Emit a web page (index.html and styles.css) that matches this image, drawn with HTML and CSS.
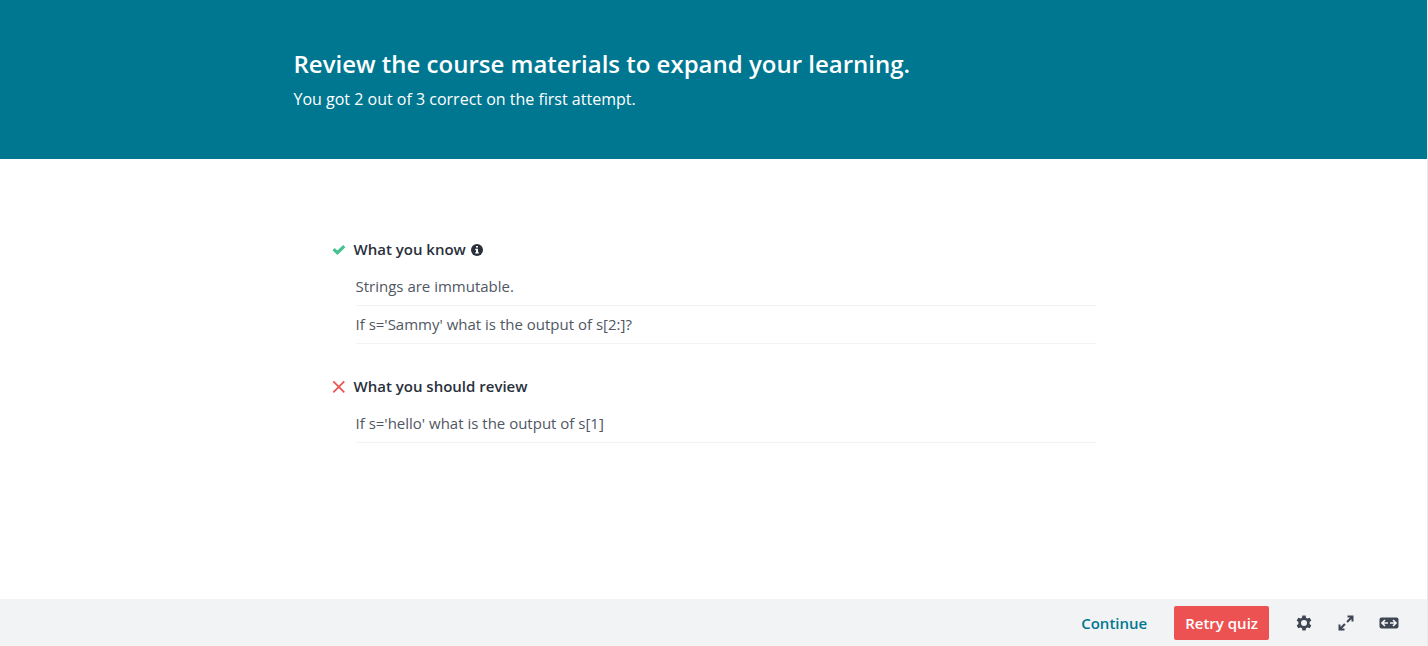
FILE: index.html
```html
<!DOCTYPE html>
<html lang="en">
<head>
<meta charset="utf-8">
<meta name="viewport" content="width=device-width, initial-scale=1">
<title>Quiz results</title>
<link rel="stylesheet" href="styles.css">
</head>
<body>
<div class="page">
  <header class="banner">
    <div class="banner-inner">
      <h1 class="banner-title">Review the course materials to expand your learning.</h1>
      <p class="banner-score">You got 2 out of 3 correct on the first attempt.</p>
    </div>
  </header>
  <main class="results">
    <section class="group">
      <h2 class="group-title">
        <svg class="mark mark-correct" viewBox="0 -1 14 14" aria-hidden="true"><path d="M.5 7.300 2.700 5.100 5.400 7.600 11.200 2 13.400 4.200 5.400 12Z"/></svg>
        <span>What you know</span>
        <svg class="info" viewBox="0 -1 12 12" role="img" aria-label="Information"><circle cx="6" cy="6" r="6"/><path d="M5 2h2v1.600H5zM4.200 4.700H7v3.600h.9v1.300H4.200V8.300H5V6h-.8z"/></svg>
      </h2>
      <ul class="questions">
        <li class="question">Strings are immutable.</li>
        <li class="question">If s='Sammy' what is the output of s[2:]?</li>
      </ul>
    </section>
    <section class="group">
      <h2 class="group-title">
        <svg class="mark mark-wrong" viewBox="0 -1 14 14" aria-hidden="true"><path d="M1.300 1.300 12.300 12.300M12.300 1.300 1.300 12.300"/></svg>
        <span>What you should review</span>
      </h2>
      <ul class="questions">
        <li class="question">If s='hello' what is the output of s[1]</li>
      </ul>
    </section>
  </main>
  <footer class="toolbar">
    <a class="continue" href="#">Continue</a>
    <button class="retry" type="button">Retry quiz</button>
    <button class="tool" type="button" aria-label="Settings">
      <svg class="tool-icon" viewBox="0 0 20 20"><path fill-rule="evenodd" d="M8.400 2.500h3.200l.4 2.200 1.500.9 2.200-.8 1.600 2.800-1.700 1.500v1.800l1.700 1.500-1.600 2.800-2.200-.8-1.500.9-.4 2.200H8.400L8 15.300l-1.500-.9-2.200.8-1.600-2.800 1.700-1.500V9.100L2.700 7.600l1.600-2.800 2.200.8L8 4.700zM10 7a3 3 0 1 0 0 6 3 3 0 0 0 0-6z"/></svg>
    </button>
    <button class="tool" type="button" aria-label="Full screen">
      <svg class="tool-icon" viewBox="0 0 20 20"><path d="M11.500 2.500h6v6h-2V6l-3.700 3.700-1.500-1.500L14 4.500h-2.500zM2.500 11.500h2V14l3.700-3.700 1.500 1.500L6 15.500h2.500v2h-6z"/></svg>
    </button>
    <button class="tool" type="button" aria-label="Full width">
      <svg class="tool-icon tool-icon-wide" viewBox="0 0 22 20"><rect x="1.500" y="4.500" width="19" height="11" rx="2"/><path class="tool-arrows" d="M7 7 4 10l3 3M4 10H10M15 7 18 10l-3 3M18 10H12"/></svg>
    </button>
  </footer>
</div>
</body>
</html>
```
FILE: styles.css
```css
* { box-sizing: border-box; }
body {
  margin: 0;
  background: #fff;
  color: #29303b;
  font: 15px/22px "Open Sans", sans-serif;
}
h1, h2, p, ul { margin: 0; padding: 0; }
.page {
  display: flex;
  flex-direction: column;
  min-height: 100vh;
  border-right: 1px solid #e8e9eb;
}
.banner {
  padding: 48px 24px;
  background: #007791;
  color: #fff;
}
.banner-inner {
  max-width: 840px;
  margin: 0 auto;
}
.banner-title {
  font-size: 24px;
  line-height: 31px;
  font-weight: 600;
}
.banner-score {
  padding-top: 8px;
  font-size: 16px;
  line-height: 24px;
}
.results {
  flex: 1;
  display: flex;
  flex-direction: column;
  gap: 32px;
  width: 100%;
  max-width: 764px;
  margin: 0 auto;
  padding-top: 80px;
}
.group-title {
  display: flex;
  align-items: center;
  font-size: 15px;
  line-height: 20px;
  font-weight: 600;
}
.mark {
  width: 14px;
  height: 14px;
  margin-right: 8px;
  overflow: visible;
}
.mark-correct { fill: #46c28e; }
.mark-wrong {
  fill: none;
  stroke: #ec5252;
  stroke-width: 1.7;
}
.info {
  width: 12px;
  height: 12px;
  margin-left: 5px;
  overflow: visible;
  fill: #29303b;
}
.info path { fill: #fff; }
.questions {
  list-style: none;
  margin-left: 24px;
  padding-top: 9px;
}
.question {
  padding: 7px 0 8px;
  border-bottom: 1px solid #f2f3f5;
  color: #505763;
}
.toolbar {
  display: flex;
  align-items: center;
  justify-content: flex-end;
  height: 47px;
  padding-right: 27px;
  background: #f2f3f5;
}
.continue {
  margin-right: 27px;
  color: #007791;
  font-weight: 600;
  text-decoration: none;
}
.retry {
  height: 34px;
  margin-right: 25px;
  padding: 0 11px;
  border: 0;
  border-radius: 2px;
  background: #ec5252;
  color: #fff;
  font: 600 15px/22px "Open Sans", sans-serif;
}
.tool {
  display: flex;
  margin-left: 22px;
  padding: 0;
  border: 0;
  background: none;
}
.retry + .tool { margin-left: 0; }
.tool-icon {
  width: 20px;
  height: 20px;
  fill: #3e4653;
}
.tool-icon-wide { width: 22px; }
.tool-arrows {
  fill: none;
  stroke: #f2f3f5;
  stroke-width: 1.7;
}
```
